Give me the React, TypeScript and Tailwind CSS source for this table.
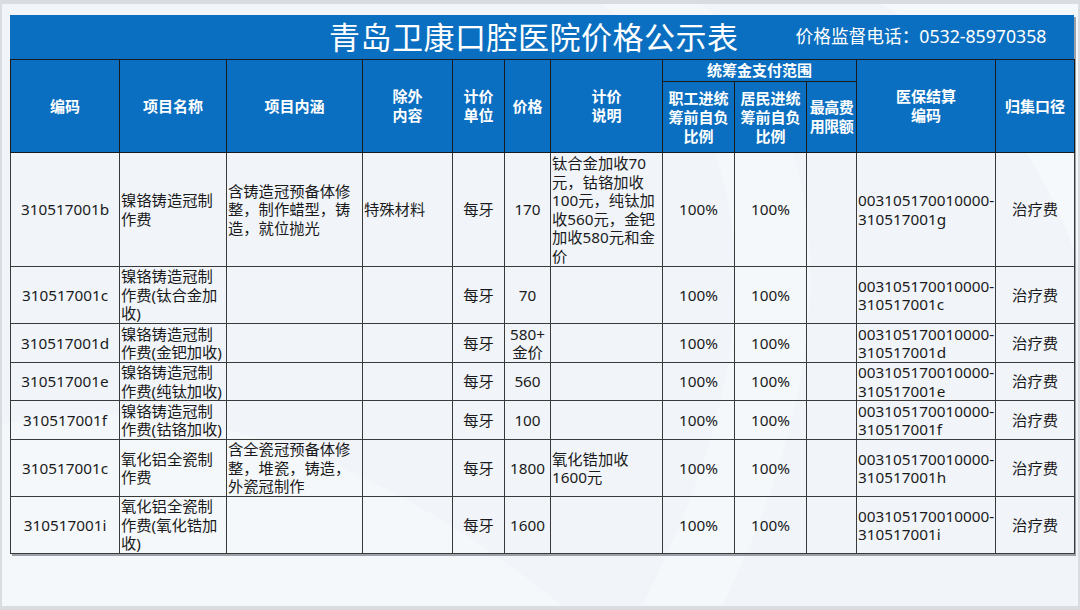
import React from 'react';

type Row = {
  code: string;
  name: string[];
  content: string[];
  except: string;
  price: string[];
  note: string[];
  ins: string[];
  h: string;
};

const rows: Row[] = [
  {
    code: '310517001b',
    name: ['镍铬铸造冠制', '作费'],
    content: ['含铸造冠预备体修', '整，制作蜡型，铸', '造，就位抛光'],
    except: '特殊材料',
    price: ['170'],
    note: ['钛合金加收70', '元，钴铬加收', '100元，纯钛加', '收560元，金钯', '加收580元和金', '价'],
    ins: ['003105170010000-', '310517001g'],
    h: 'h-[114px]',
  },
  {
    code: '310517001c',
    name: ['镍铬铸造冠制', '作费(钛合金加', '收)'],
    content: [],
    except: '',
    price: ['70'],
    note: [],
    ins: ['003105170010000-', '310517001c'],
    h: 'h-[57px]',
  },
  {
    code: '310517001d',
    name: ['镍铬铸造冠制', '作费(金钯加收)'],
    content: [],
    except: '',
    price: ['580+', '金价'],
    note: [],
    ins: ['003105170010000-', '310517001d'],
    h: 'h-[39px]',
  },
  {
    code: '310517001e',
    name: ['镍铬铸造冠制', '作费(纯钛加收)'],
    content: [],
    except: '',
    price: ['560'],
    note: [],
    ins: ['003105170010000-', '310517001e'],
    h: 'h-[38px]',
  },
  {
    code: '310517001f',
    name: ['镍铬铸造冠制', '作费(钴铬加收)'],
    content: [],
    except: '',
    price: ['100'],
    note: [],
    ins: ['003105170010000-', '310517001f'],
    h: 'h-[39px]',
  },
  {
    code: '310517001c',
    name: ['氧化铝全瓷制', '作费'],
    content: ['含全瓷冠预备体修', '整，堆瓷，铸造，', '外瓷冠制作'],
    except: '',
    price: ['1800'],
    note: ['氧化锆加收', '1600元'],
    ins: ['003105170010000-', '310517001h'],
    h: 'h-[57px]',
  },
  {
    code: '310517001i',
    name: ['氧化铝全瓷制', '作费(氧化锆加', '收)'],
    content: [],
    except: '',
    price: ['1600'],
    note: [],
    ins: ['003105170010000-', '310517001i'],
    h: 'h-[57px]',
  },
];

const Lines = ({ lines }: { lines: string[] }) => (
  <>
    {lines.map((l, i) => (
      <div key={i} className="whitespace-nowrap">
        {l}
      </div>
    ))}
  </>
);

const th = 'border border-[#1a1a1a] text-center align-middle font-bold text-white text-[15px] leading-[19px] px-0';
const td = 'border border-[#3a3a3a] align-middle leading-[18.5px] px-[1px] py-0';

export default function App() {
  return (
    <div className="relative w-[1080px] h-[610px] overflow-hidden border-t-[4px] border-b-[4px] border-x-[2px] border-[#d9dce1] bg-[#f1f5fa] font-['Noto_Sans','Noto_Sans_CJK_SC',sans-serif] text-[15.3px] text-[#1a1a1a]">
      <svg className="absolute inset-0 pointer-events-none" width="1076" height="602" viewBox="0 0 1076 602">
        <path d="M600 0 C 760 120, 780 330, 640 602 L 720 602 C 850 340, 830 120, 700 0 Z" fill="#ffffff" opacity="0.3" />
        <path d="M880 0 C 1000 80, 1060 200, 1076 260 L 1076 0 Z" fill="#ffffff" opacity="0.4" />
        <path d="M0 420 C 200 380, 400 470, 560 602 L 0 602 Z" fill="#ffffff" opacity="0.3" />
      </svg>

      <div className="relative ml-[8px] mt-[11px] w-[1064px] shadow-[2px_2px_0_#9ba1a8]">
        <div className="flex items-center h-[44px] bg-[#0a6fc0] text-white pl-[319px]">
          <span className="text-[31px] leading-none tracking-[0.5px]">青岛卫康口腔医院价格公示表</span>
          <span className="ml-[57px] text-[17.7px] leading-none">价格监督电话：0532-85970358</span>
        </div>

        <table className="w-[1064px] table-fixed border-collapse">
          <colgroup>
            <col className="w-[109px]" />
            <col className="w-[107px]" />
            <col className="w-[136px]" />
            <col className="w-[90px]" />
            <col className="w-[52px]" />
            <col className="w-[46px]" />
            <col className="w-[112px]" />
            <col className="w-[72px]" />
            <col className="w-[72px]" />
            <col className="w-[50px]" />
            <col className="w-[139px]" />
            <col className="w-[79px]" />
          </colgroup>
          <thead className="bg-[#0a6fc0]">
            <tr className="h-[22px]">
              <th rowSpan={2} className={th}>编码</th>
              <th rowSpan={2} className={th}>项目名称</th>
              <th rowSpan={2} className={th}>项目内涵</th>
              <th rowSpan={2} className={th}><Lines lines={['除外', '内容']} /></th>
              <th rowSpan={2} className={th}><Lines lines={['计价', '单位']} /></th>
              <th rowSpan={2} className={th}>价格</th>
              <th rowSpan={2} className={th}><Lines lines={['计价', '说明']} /></th>
              <th colSpan={3} className={th}>统筹金支付范围</th>
              <th rowSpan={2} className={th}><Lines lines={['医保结算', '编码']} /></th>
              <th rowSpan={2} className={th}>归集口径</th>
            </tr>
            <tr className="h-[71px]">
              <th className={th}><Lines lines={['职工进统', '筹前自负', '比例']} /></th>
              <th className={th}><Lines lines={['居民进统', '筹前自负', '比例']} /></th>
              <th className={`${th} tracking-[-0.5px]`}><Lines lines={['最高费', '用限额']} /></th>
            </tr>
          </thead>
          <tbody>
            {rows.map((r, i) => (
              <tr key={i} className={r.h}>
                <td className={`${td} text-center`}>{r.code}</td>
                <td className={td}><Lines lines={r.name} /></td>
                <td className={td}><Lines lines={r.content} /></td>
                <td className={td}>{r.except}</td>
                <td className={`${td} text-center`}>每牙</td>
                <td className={`${td} text-center`}><Lines lines={r.price} /></td>
                <td className={td}><Lines lines={r.note} /></td>
                <td className={`${td} text-center`}>100%</td>
                <td className={`${td} text-center`}>100%</td>
                <td className={td}></td>
                <td className={td}><Lines lines={r.ins} /></td>
                <td className={`${td} text-center`}>治疗费</td>
              </tr>
            ))}
          </tbody>
        </table>
      </div>
    </div>
  );
}
